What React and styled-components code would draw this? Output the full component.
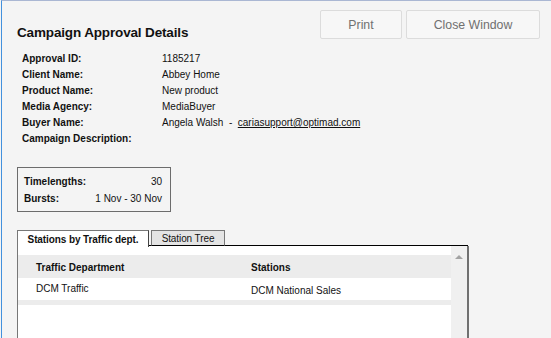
import React from 'react';
import styled, { createGlobalStyle } from 'styled-components';

const GlobalStyle = createGlobalStyle`
  html, body {
    margin: 0;
    padding: 0;
    background: #f4f4f4;
    overflow: hidden;
  }
  body {
    font-family: "Liberation Sans", Arial, sans-serif;
    color: #111;
  }
`;

const Window = styled.div`
  height: 337px;
  margin-left: 1px;
  border-top: 1px solid #aab7d3;
  border-left: 1px solid #4391dd;
  padding-left: 15px;
  overflow: hidden;
`;

const Header = styled.div`
  display: flex;
  justify-content: space-between;
  align-items: flex-start;
  padding: 9px 11px 0 0;
`;

const Title = styled.h1`
  margin: 15px 0 0;
  font-size: 13.5px;
  line-height: 16px;
  letter-spacing: -0.15px;
  font-weight: 700;
  color: #111;
`;

const Buttons = styled.div`
  display: flex;
  gap: 4px;
`;

const Button = styled.button`
  width: ${({ $width }) => $width}px;
  height: 29px;
  background: #f7f7f7;
  border: 1px solid #dcdcdc;
  border-radius: 2px;
  color: #707070;
  font-family: "Liberation Sans", Arial, sans-serif;
  font-size: 12.3px;
  padding: 0;
  cursor: pointer;
`;

const Details = styled.div`
  display: grid;
  grid-template-columns: 140px 1fr;
  grid-auto-rows: 16px;
  margin: 10px 0 0 5px;
  font-size: 10px;
  line-height: 16px;
`;

const Label = styled.div`
  font-weight: 700;
`;

const Value = styled.div`
  color: #111;
`;

const Link = styled.a`
  color: #111;
  text-decoration: underline;
`;

const SummaryBox = styled.div`
  width: 138px;
  margin-top: 20px;
  padding: 5px 8px 4px 6px;
  border: 1px solid #6c6c6c;
  font-size: 10px;
`;

const SummaryRow = styled.div`
  display: flex;
  justify-content: space-between;
  height: 17px;
  line-height: 17px;
`;

const TabStrip = styled.div`
  display: flex;
  align-items: flex-end;
  margin-top: 18px;
  width: 451px;
  font-size: 10px;
`;

const Tab = styled.div`
  box-sizing: border-box;
  width: ${({ $active }) => ($active ? 132 : 74)}px;
  height: ${({ $active }) => ($active ? 17 : 16)}px;
  text-align: center;
  line-height: ${({ $active }) => ($active ? 18 : 15)}px;
  letter-spacing: -0.1px;
  white-space: nowrap;
  background: ${({ $active }) => ($active ? '#fff' : '#e4e4e4')};
  border: 1px solid #777;
  border-right-color: ${({ $active }) => ($active ? '#444' : '#777')};
  border-bottom: ${({ $active }) => ($active ? 'none' : '1px solid #000')};
  font-weight: ${({ $active }) => ($active ? 700 : 400)};
  margin-bottom: ${({ $active }) => ($active ? '-1px' : '0')};
  position: relative;
  z-index: 1;
`;

const Gap = styled.div`
  width: 2px;
  height: 1px;
  background: #000;
`;

const TabFill = styled.div`
  flex: 1;
  height: 1px;
  background: #000;
`;

const Panel = styled.div`
  display: flex;
  width: 452px;
  height: 100px;
  background: #fff;
  border-left: 1px solid #777;
  border-right: 2px solid #707070;
  box-sizing: border-box;
  font-size: 10px;
`;

const Grid = styled.div`
  flex: 1;
  padding-top: 9px;
`;

const Row = styled.div`
  display: grid;
  grid-template-columns: 215px 1fr;
  padding-left: 18px;
  height: ${({ $head }) => ($head ? 23 : 22)}px;
  background: ${({ $head }) => ($head ? '#ececec' : '#fff')};
  font-weight: ${({ $head }) => ($head ? 700 : 400)};
`;

const Cell = styled.div`
  line-height: 16px;
  padding-top: ${({ $top }) => $top}px;
`;

const Strip = styled.div`
  height: 5px;
  background: #ececec;
`;

const Scrollbar = styled.div`
  width: 16px;
  background: #f0f0f0;
  display: flex;
  justify-content: center;
  padding-top: 9px;
`;

const Arrow = styled.div`
  width: 0;
  height: 0;
  border-left: 4px solid transparent;
  border-right: 4px solid transparent;
  border-bottom: 4px solid #a3a3a3;
`;

const details = [
  ['Approval ID:', '1185217'],
  ['Client Name:', 'Abbey Home'],
  ['Product Name:', 'New product'],
  ['Media Agency:', 'MediaBuyer'],
];

export default function App() {
  return (
    <>
      <GlobalStyle />
      <Window>
        <Header>
          <Title>Campaign Approval Details</Title>
          <Buttons>
            <Button $width={82}>Print</Button>
            <Button $width={134}>Close Window</Button>
          </Buttons>
        </Header>

        <Details>
          {details.map(([label, value]) => (
            <React.Fragment key={label}>
              <Label>{label}</Label>
              <Value>{value}</Value>
            </React.Fragment>
          ))}
          <Label>Buyer Name:</Label>
          <Value>
            Angela Walsh&nbsp; -&nbsp; <Link href="#">cariasupport@optimad.com</Link>
          </Value>
          <Label>Campaign Description:</Label>
          <Value />
        </Details>

        <SummaryBox>
          <SummaryRow>
            <Label>Timelengths:</Label>
            <span>30</span>
          </SummaryRow>
          <SummaryRow>
            <Label>Bursts:</Label>
            <span>1 Nov - 30 Nov</span>
          </SummaryRow>
        </SummaryBox>

        <TabStrip>
          <Tab $active>Stations by Traffic dept.</Tab>
          <Gap />
          <Tab>Station Tree</Tab>
          <TabFill />
        </TabStrip>

        <Panel>
          <Grid>
            <Row $head>
              <Cell $top={5}>Traffic Department</Cell>
              <Cell $top={5}>Stations</Cell>
            </Row>
            <Row>
              <Cell $top={3}>DCM Traffic</Cell>
              <Cell $top={5}>DCM National Sales</Cell>
            </Row>
            <Strip />
          </Grid>
          <Scrollbar>
            <Arrow />
          </Scrollbar>
        </Panel>
      </Window>
    </>
  );
}
